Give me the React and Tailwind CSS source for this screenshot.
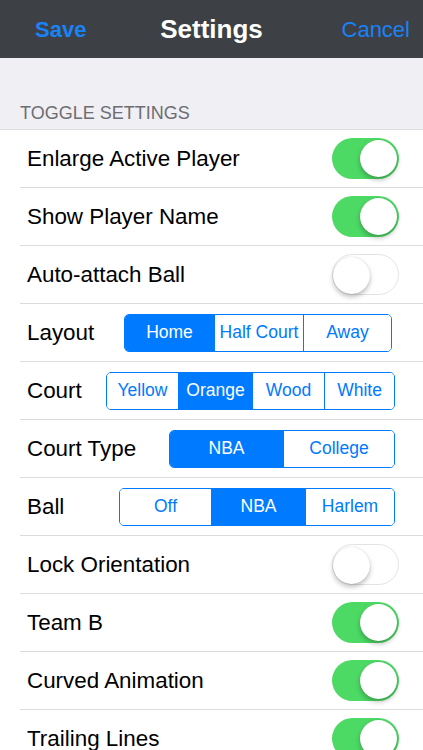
import React, { useState } from 'react';

const Toggle = ({ on, onClick }) => (
    <button
        onClick={onClick}
        className={`relative w-[67px] h-[41px] rounded-full shrink-0 ${
            on ? 'bg-[#4cd964]' : 'bg-white border-[1.5px] border-[#e3e3e3]'
        }`}
    >
        <span
            className={`absolute top-[2px] w-[37px] h-[37px] rounded-full bg-white shadow-[0_3px_5px_rgba(0,0,0,0.25),0_0_1px_rgba(0,0,0,0.2)] ${
                on ? 'right-[2px]' : 'left-[0px] top-[1px]'
            }`}
        />
    </button>
);

const Segmented = ({ options, value, widths, onChange, extraClass }) => (
    <div className={`flex h-[38px] rounded-[5px] border border-[#007aff] overflow-hidden shrink-0 ${extraClass || ''}`}>
        {options.map((opt, i) => (
            <button
                key={opt}
                onClick={() => onChange(opt)}
                style={{ width: widths[i] }}
                className={`h-full text-[17.5px] flex items-center justify-center ${
                    i > 0 ? 'border-l border-[#007aff]' : ''
                } ${value === opt ? 'bg-[#007aff] text-white' : 'bg-white text-[#007aff]'}`}
            >
                {opt}
            </button>
        ))}
    </div>
);

const Row = ({ label, children }) => (
    <div className="ml-[20px] h-[58px] border-b border-[#dcdcdf] flex items-center justify-between pl-[7px] pr-[24px]">
        <span className="text-[22.4px] text-black">{label}</span>
        {children}
    </div>
);

const App = () => {
    const [toggles, setToggles] = useState({
        enlarge: true,
        showName: true,
        autoBall: false,
        lock: false,
        teamB: true,
        curved: true,
        trailing: true,
    });
    const [layout, setLayout] = useState('Home');
    const [court, setCourt] = useState('Orange');
    const [courtType, setCourtType] = useState('NBA');
    const [ball, setBall] = useState('NBA');

    const flip = (key) => setToggles({ ...toggles, [key]: !toggles[key] });

    return (
        <div className="w-[423px] h-[750px] overflow-hidden bg-white" style={{ fontFamily: '"Liberation Sans", Arial, sans-serif' }}>
            <div className="h-[58px] bg-[#3d4044] flex items-center justify-between px-[35px] pr-[13px] relative">
                <span className="text-[22px] font-bold text-[#1a82f7]">Save</span>
                <span className="absolute left-0 right-0 text-center text-[26px] font-bold text-white pointer-events-none">Settings</span>
                <span className="text-[22px] text-[#1a82f7]">Cancel</span>
            </div>
            <div className="h-[72px] bg-[#efeff4] flex items-end pl-[20px] pb-[2px] border-b border-[#dcdcdf]">
                <span className="text-[18px] text-[#6d6d72]">TOGGLE SETTINGS</span>
            </div>
            <Row label="Enlarge Active Player">
                <Toggle on={toggles.enlarge} onClick={() => flip('enlarge')} />
            </Row>
            <Row label="Show Player Name">
                <Toggle on={toggles.showName} onClick={() => flip('showName')} />
            </Row>
            <Row label="Auto-attach Ball">
                <Toggle on={toggles.autoBall} onClick={() => flip('autoBall')} />
            </Row>
            <Row label="Layout">
                <Segmented
                    options={['Home', 'Half Court', 'Away']}
                    widths={[89, 89, 88]}
                    value={layout}
                    onChange={setLayout}
                    extraClass="mr-[7px]"
                />
            </Row>
            <Row label="Court">
                <Segmented
                    options={['Yellow', 'Orange', 'Wood', 'White']}
                    widths={[71, 74, 72, 70]}
                    value={court}
                    onChange={setCourt}
                    extraClass="mr-[4px]"
                />
            </Row>
            <Row label="Court Type">
                <Segmented
                    options={['NBA', 'College']}
                    widths={[113, 111]}
                    value={courtType}
                    onChange={setCourtType}
                    extraClass="mr-[4px]"
                />
            </Row>
            <Row label="Ball">
                <Segmented
                    options={['Off', 'NBA', 'Harlem']}
                    widths={[91, 94, 89]}
                    value={ball}
                    onChange={setBall}
                    extraClass="mr-[4px]"
                />
            </Row>
            <Row label="Lock Orientation">
                <Toggle on={toggles.lock} onClick={() => flip('lock')} />
            </Row>
            <Row label="Team B">
                <Toggle on={toggles.teamB} onClick={() => flip('teamB')} />
            </Row>
            <Row label="Curved Animation">
                <Toggle on={toggles.curved} onClick={() => flip('curved')} />
            </Row>
            <Row label="Trailing Lines">
                <Toggle on={toggles.trailing} onClick={() => flip('trailing')} />
            </Row>
        </div>
    );
};

export default App;
